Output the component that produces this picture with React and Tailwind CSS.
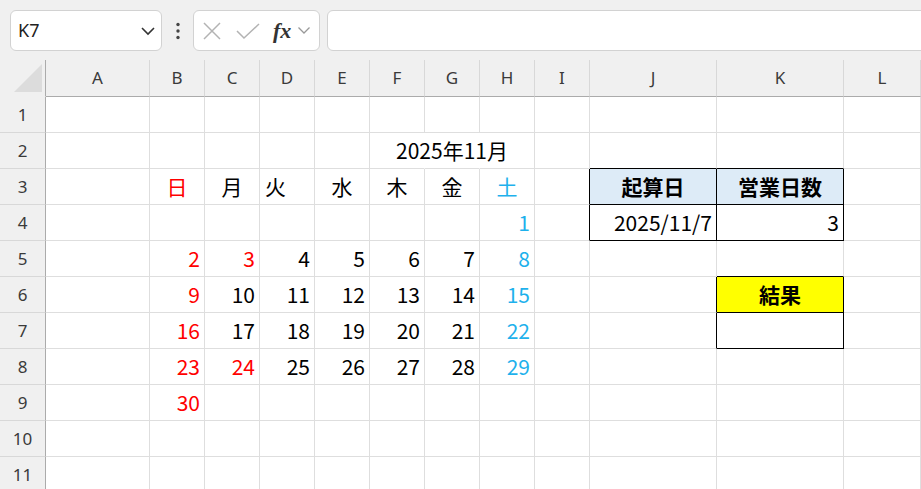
import React from "react";

const COLS = ["A", "B", "C", "D", "E", "F", "G", "H", "I", "J", "K", "L"];
const ROWS = [1, 2, 3, 4, 5, 6, 7, 8, 9, 10, 11];

const RED = "text-[#ff0000]";
const BLUE = "text-[#1eb1ec]";
const BLACK = "text-black";

// calendar data for Nov 2025 (B..H = 日..土)
const cells = {};
cells.G2 = { t: "2025年11月", align: "center", overflow: true };
const days = ["日", "月", "火", "水", "木", "金", "土"];
const dayCols = ["B", "C", "D", "E", "F", "G", "H"];
days.forEach((d, i) => {
  cells[dayCols[i] + "3"] = {
    t: d,
    align: d === "火" ? "left" : "center",
    color: i === 0 ? RED : i === 6 ? BLUE : BLACK,
  };
});
for (let n = 1; n <= 30; n++) {
  const idx = n + 5; // Nov 1 is Saturday
  const row = 4 + Math.floor(idx / 7);
  const c = idx % 7;
  let color = c === 0 ? RED : c === 6 ? BLUE : BLACK;
  if (n === 3 || n === 24) color = RED;
  cells[dayCols[c] + row] = { t: String(n), align: "right", color };
}
cells.J3 = { t: "起算日", align: "center", bold: true, bg: "bg-[#ddebf7]" };
cells.K3 = { t: "営業日数", align: "center", bold: true, bg: "bg-[#ddebf7]" };
cells.J4 = { t: "2025/11/7", align: "right" };
cells.K4 = { t: "3", align: "right" };
cells.K6 = { t: "結果", align: "center", bold: true, bg: "bg-[#ffff00]" };

function rightBlack(col, row) {
  if ((col === "I" || col === "J" || col === "K") && (row === 3 || row === 4)) return true;
  if ((col === "J" || col === "K") && (row === 6 || row === 7)) return true;
  return false;
}
function bottomBlack(col, row) {
  if ((col === "J" || col === "K") && row >= 2 && row <= 4) return true;
  if (col === "K" && row >= 5 && row <= 7) return true;
  return false;
}

function Cell({ col, row }) {
  const key = col + row;
  const c = cells[key];
  let r = rightBlack(col, row) ? "border-r-black" : "border-r-[#dedede]";
  if (key === "F2" || key === "G2") r = "border-r-white";
  const b = bottomBlack(col, row) ? "border-b-black" : "border-b-[#dedede]";
  const align =
    c?.align === "center"
      ? "justify-center"
      : c?.align === "left"
      ? "justify-start pl-[5px]"
      : "justify-end pr-[4px]";
  return (
    <div
      className={`flex items-center border-r border-b ${r} ${b} ${c?.bg || ""} ${align} ${
        c?.overflow ? "overflow-visible z-10" : "overflow-hidden"
      } min-w-0 text-[21px]`}
      style={{ fontFamily: '"Noto Sans CJK JP", sans-serif' }}
    >
      {c && (
        <span className={`whitespace-nowrap leading-none ${c.color || "text-black"} ${c.bold ? "font-bold" : ""}`}>
          {c.t}
        </span>
      )}
    </div>
  );
}

export default function App() {
  return (
    <div
      className="h-screen w-full overflow-hidden bg-white"
      style={{ fontFamily: '"Noto Sans", "Open Sans", sans-serif' }}
    >
      {/* toolbar */}
      <div className="h-[60px] bg-[#f0f0f0] flex items-start pt-[10px]">
        <div className="ml-[10px] w-[152px] h-[41px] rounded-[6px] border border-[#d2d2d2] bg-white flex items-center justify-between pl-[7px] pr-[5px]">
          <span className="text-[18px] text-[#222]">K7</span>
          <svg width="16" height="10" viewBox="0 0 16 10">
            <path d="M2 2 L8 8 L14 2" fill="none" stroke="#333" strokeWidth="1.6" />
          </svg>
        </div>
        <div className="w-[31px] h-[41px] flex items-center justify-center">
          <svg width="4" height="18" viewBox="0 0 4 18">
            <circle cx="2" cy="2.5" r="1.7" fill="#444" />
            <circle cx="2" cy="9" r="1.7" fill="#444" />
            <circle cx="2" cy="15.5" r="1.7" fill="#444" />
          </svg>
        </div>
        <div className="w-[127px] h-[41px] rounded-[6px] border border-[#d2d2d2] bg-white flex items-center pl-[8px]">
          <svg width="20" height="20" viewBox="0 0 20 20">
            <path d="M2 2 L18 18 M18 2 L2 18" stroke="#b3b3b3" strokeWidth="1.5" />
          </svg>
          <svg width="26" height="20" viewBox="0 0 26 20" className="ml-[13px]">
            <path d="M2 10 L9 17 L24 3" fill="none" stroke="#b3b3b3" strokeWidth="1.5" />
          </svg>
          <span
            className="ml-[12px] text-[22px] italic font-bold text-[#333] leading-none"
            style={{ fontFamily: '"Liberation Serif", serif' }}
          >
            fx
          </span>
          <svg width="14" height="9" viewBox="0 0 14 9" className="ml-[6px]">
            <path d="M1.5 1.5 L7 7 L12.5 1.5" fill="none" stroke="#999" strokeWidth="1.3" />
          </svg>
        </div>
        <div className="ml-[7px] flex-1 -mr-[20px] h-[41px] rounded-[6px] border border-[#d2d2d2] bg-white" />
      </div>

      {/* grid */}
      <div className="grid grid-cols-[46px_104px_repeat(8,55px)_127px_127px_1fr] grid-rows-[37px_repeat(11,36px)]">
        <div className="bg-[#f0f0f0] border-r border-b border-r-[#ababab] border-b-[#f0f0f0] flex items-end justify-end pr-[3px] pb-[4px]">
          <svg width="28" height="28" viewBox="0 0 28 28">
            <path d="M28 0 L28 28 L0 28 Z" fill="#dcdcdc" />
          </svg>
        </div>
        {COLS.map((c) => (
          <div
            key={c}
            className="bg-[#f0f0f0] border-r border-b border-r-[#d8d8d8] border-b-[#ababab] flex items-center justify-center text-[17px] text-[#3a3a3a]"
          >
            {c}
          </div>
        ))}
        {ROWS.map((r) => (
          <React.Fragment key={r}>
            <div className="bg-[#f0f0f0] border-r border-b border-r-[#ababab] border-b-[#d8d8d8] flex items-center justify-center text-[17px] text-[#3a3a3a]">
              {r}
            </div>
            {COLS.map((c) => (
              <Cell key={c + r} col={c} row={r} />
            ))}
          </React.Fragment>
        ))}
      </div>
    </div>
  );
}
